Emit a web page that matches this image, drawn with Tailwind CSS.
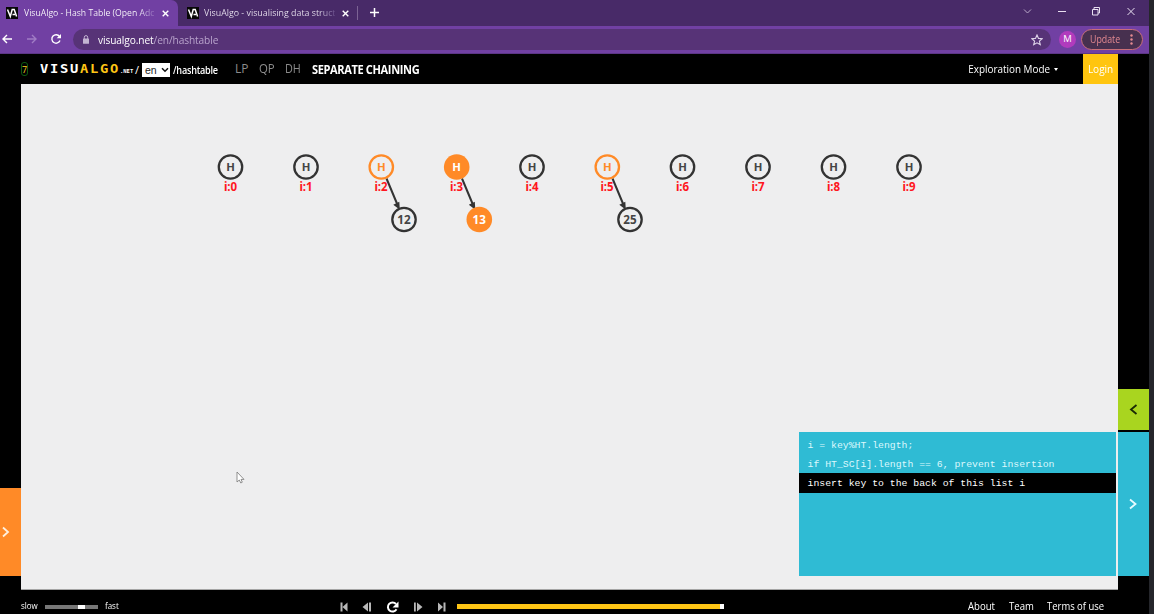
<!DOCTYPE html>
<html lang="en">
<head>
<meta charset="utf-8">
<title>VisuAlgo - Hash Table</title>
<script src="https://cdn.jsdelivr.net/npm/@tailwindcss/browser@4"></script>
</head>
<body class="w-[1154px] h-[614px] overflow-hidden bg-[#25262b] font-['Open_Sans',sans-serif]">
<div class="relative w-[1149px] h-[614px] flex flex-col bg-black overflow-hidden whitespace-nowrap">

  <!-- tab strip -->
  <div class="h-[26px] shrink-0 flex bg-[#482a68] text-[9.500px] text-white">
    <div class="w-[178px] h-full bg-[#7140a3] rounded-tr-[7px] flex items-center pl-[6px]">
      <svg class="w-3 h-3 shrink-0" viewBox="0 0 12 12"><rect width="12" height="12" fill="#080808"/><path d="M1.500 2.500L4.300 9.500 6.200 2.500H8.200L10.600 9.500M6.500 7.500H9" fill="none" stroke="#fff" stroke-width="1.500"/></svg>
      <div class="ml-[6px] w-[132px]"><span class="inline-block origin-left scale-x-[0.91] bg-linear-to-r from-white from-88% to-[#8d64b7] bg-clip-text text-transparent">VisuAlgo - Hash Table (Open Adc</span></div>
      <svg class="ml-[6px] w-[7px] h-[7px]" viewBox="0 0 7 7"><path d="M.7.7l5.600 5.600M6.300.7L.7 6.300" stroke="#fff" stroke-width="1.400"/></svg>
    </div>
    <div class="w-[180px] flex items-center pl-[9px]">
      <svg class="w-3 h-3 shrink-0" viewBox="0 0 12 12"><rect width="12" height="12" fill="#080808"/><path d="M1.500 2.500L4.300 9.500 6.200 2.500H8.200L10.600 9.500M6.500 7.500H9" fill="none" stroke="#fff" stroke-width="1.500"/></svg>
      <div class="ml-[5px] w-[132px]"><span class="inline-block origin-left scale-x-[0.93] bg-linear-to-r from-[#ece6f2] from-88% to-[#654986] bg-clip-text text-transparent">VisuAlgo - visualising data struct</span></div>
      <svg class="ml-[6px] w-[7px] h-[7px]" viewBox="0 0 7 7"><path d="M.7.7l5.600 5.600M6.300.7L.7 6.300" stroke="#fff" stroke-width="1.400"/></svg>
      <div class="ml-[8px] w-px h-[14px] bg-[#7c6394]"></div>
    </div>
    <svg class="ml-[12px] mt-[8px] w-[9px] h-[9px]" viewBox="0 0 9 9"><path d="M4.500 0v9M0 4.500h9" stroke="#fff" stroke-width="1.500"/></svg>
    <div class="flex-1"></div>
    <svg class="w-[114px] h-[22px] mr-[12px]" viewBox="0 0 114 22" fill="none" stroke="#e9e0f1"><path d="M1 9.500l3.500 3.500L8 9.500" stroke="#b9a8c9"/><path d="M35 11.500h8"/><path d="M69.500 9.500h5.500v5.500h-5.500zM71 9V7.500h5.500V13H75"/><path d="M104.500 8l7 7M111.500 8l-7 7"/></svg>
  </div>

  <!-- address bar -->
  <div class="h-[28px] shrink-0 flex items-center bg-[#7140a3] border-b border-[#5c3686]">
    <svg class="w-[73px] h-[27px]" viewBox="0 0 73 27" fill="none" stroke-width="1.400"><path d="M12 13H3M7 9l-4 4 4 4" stroke="#fff"/><path d="M27 13h9M32 9l4 4-4 4" stroke="#a07cc5"/><path d="M59.500 10.500A4.200 4.200 0 1 0 60 14.500" stroke="#fff"/><path d="M61 8v4.300h-4.300z" fill="#fff"/></svg>
    <div class="w-[978px] h-[21px] rounded-full bg-[#573377] flex items-center pl-[9px] pr-[8px]">
      <svg class="w-[8px] h-[9px]" viewBox="0 0 8 9"><rect x="1" y="3.500" width="6" height="5.300" rx=".6" fill="#c3b4d2"/><path d="M2.300 4V2.300a1.700 1.700 0 0 1 3.400 0V4" fill="none" stroke="#c3b4d2"/></svg>
      <div class="ml-[8px] mt-[1px] text-[11px] text-[#b9a4cc] tracking-[-0.12px] origin-left scale-x-[0.925]"><span class="text-white">visualgo.net</span>/en/hashtable</div>
      <svg class="ml-auto w-[12px] h-[12px]" viewBox="0 0 12 12"><path d="M6 1l1.500 3.400 3.700.3-2.800 2.400.9 3.600L6 8.800l-3.300 1.900.9-3.600L.8 4.700l3.700-.3z" fill="none" stroke="#e0d5ea" stroke-width="1.100"/></svg>
    </div>
    <div class="ml-[8px] w-[17px] h-[17px] rounded-full bg-[#b13bbd] text-white text-[9.500px] flex items-center justify-center">M</div>
    <div class="ml-[5px] w-[62px] h-[21px] rounded-full border border-[#c96f78] bg-[#47304f] text-[#e58a91] text-[10px] flex items-center pl-[8px]"><span class="w-[32px] origin-left scale-x-[0.88]">Update</span>
      <svg class="ml-[8px] w-[3px] h-[11px]" viewBox="0 0 3 11" fill="#e58a91"><circle cx="1.500" cy="1.500" r="1.200"/><circle cx="1.500" cy="5.500" r="1.200"/><circle cx="1.500" cy="9.500" r="1.200"/></svg>
    </div>
  </div>

  <!-- site navigation -->
  <div class="h-[30px] shrink-0 flex items-center text-white pl-[21px]">
    <div class="w-[7px] h-[14px] rounded-[3px] border border-[#0c5a12] text-[#ffd01f] text-[9px] leading-none flex items-center justify-center">7</div>
    <svg class="ml-[12px] w-[80px] h-[14px]" viewBox="0 0 80 14" font-family="DejaVu Sans Mono, monospace" font-weight="700" font-size="12" fill="#fff"><text transform="scale(1.150 1)" x="0" y="11.500" textLength="68" lengthAdjust="spacing">VISU<tspan fill="#fec515">ALGO</tspan></text></svg>
    <div class="w-[14px] mt-[4px] font-['DejaVu_Sans_Mono',monospace] font-bold text-[5.500px]">.NET</div>
    <div class="ml-[1px] w-[6px] mt-[2px] text-[11px]">/</div>
    <div class="ml-[1px] w-[28px] h-[14px] mt-[2px] bg-white text-[#222] text-[10.500px] leading-none flex items-center pl-[3px] font-['Liberation_Sans',sans-serif]">en
      <svg class="ml-[4px] w-[8px] h-[6px]" viewBox="0 0 8 6"><path d="M1 1.200l3 3 3-3" fill="none" stroke="#111" stroke-width="1.500"/></svg>
    </div>
    <div class="ml-[3px] mt-[2px] w-[46px] text-[10px] font-semibold tracking-[-0.25px] origin-left scale-x-[0.91]">/hashtable</div>
    <div class="ml-[16px] w-[24px] text-[12px] text-[#8c8c8c]">LP</div>
    <div class="w-[26px] text-[12px] text-[#8c8c8c] origin-left scale-x-95">QP</div>
    <div class="w-[27px] text-[12px] text-[#8c8c8c] origin-left scale-x-90">DH</div>
    <div class="mt-[1px] text-[12px] font-bold tracking-[-0.4px] origin-left scale-x-[0.92]">SEPARATE CHAINING</div>
    <div class="ml-auto text-[11.500px] origin-right scale-x-[0.86]">Exploration Mode</div>
    <div class="ml-[4px] border-x-[2.500px] border-x-transparent border-t-[3.500px] border-t-white"></div>
    <div class="ml-[25px] mr-[31px] w-[35px] h-full bg-[#ffc50f] text-[11.500px] flex items-center justify-center"><span class="scale-x-[0.87]">Login</span></div>
  </div>

  <!-- visualisation -->
  <div class="h-[506px] shrink-0 flex">
    <div class="w-[21px] flex flex-col pt-[404px]">
      <div class="h-[88px] bg-[#ff8a27] flex items-center">
        <svg class="ml-[2px] w-[8px] h-[12px]" viewBox="0 0 8 12"><path d="M1 1.500L6 6 1 10.500" fill="none" stroke="#fff0df" stroke-width="1.800"/></svg>
      </div>
    </div>
    <div class="relative w-[1097px] bg-[#eeeeef] border-b border-[#a5a5a5]">
      <svg class="block w-[1097px] h-[505px]" viewBox="21 84 1097 505" font-family="Noto Sans, sans-serif" font-weight="700" text-anchor="middle">
        <g font-size="11.500" fill="#ff1620">
          <text x="230.500" y="190.700" textLength="13">i:0</text><text x="306" y="190.700" textLength="13">i:1</text><text x="381" y="190.700" textLength="13">i:2</text><text x="456.500" y="190.700" textLength="13">i:3</text><text x="532" y="190.700" textLength="13">i:4</text><text x="607" y="190.700" textLength="13">i:5</text><text x="682.500" y="190.700" textLength="13">i:6</text><text x="758" y="190.700" textLength="13">i:7</text><text x="833.500" y="190.700" textLength="13">i:8</text><text x="909" y="190.700" textLength="13">i:9</text>
        </g>
        <g stroke="#333" stroke-width="2"><path d="M386.500 178.500L398 206M462 178.500L473.500 206M612.500 178.500L624 206"/></g>
        <path d="M399.800 209.800l-6.500-5 6-3zM475.300 209.800l-6.500-5 6-3zM625.800 209.800l-6.500-5 6-3z" fill="#333"/>
        <g fill="#eeeeef" stroke="#333" stroke-width="2.300">
          <circle cx="230.500" cy="167" r="11.700"/><circle cx="306" cy="167" r="11.700"/><circle cx="532" cy="167" r="11.700"/><circle cx="682.500" cy="167" r="11.700"/><circle cx="758" cy="167" r="11.700"/><circle cx="833.500" cy="167" r="11.700"/><circle cx="909" cy="167" r="11.700"/><circle cx="404" cy="219.500" r="11.700"/><circle cx="630" cy="219.500" r="11.700"/>
        </g>
        <g fill="#eeeeef" stroke="#ff8a27" stroke-width="2.300"><circle cx="381.300" cy="167" r="11.700"/><circle cx="607.300" cy="167" r="11.700"/></g>
        <g fill="#ff8a27"><circle cx="456.700" cy="167" r="12.800"/><circle cx="479.300" cy="219.500" r="12.800"/></g>
        <g font-size="11.300" fill="#444">
          <text x="230.500" y="171.200">H</text><text x="306" y="171.200">H</text><text x="381.300" y="171.200" fill="#ff8a27">H</text><text x="456.700" y="171.200" fill="#fff">H</text><text x="532" y="171.200">H</text><text x="607.300" y="171.200" fill="#ff8a27">H</text><text x="682.500" y="171.200">H</text><text x="758" y="171.200">H</text><text x="833.500" y="171.200">H</text><text x="909" y="171.200">H</text>
        </g>
        <g font-size="11.700" fill="#444"><text x="404" y="223.700">12</text><text x="479.300" y="223.700" fill="#fff">13</text><text x="630" y="223.700">25</text></g>
        <path d="M237 472v10l2.300-2 1.500 3 1.500-.8-1.300-2.800h3z" fill="#fff" stroke="#777" stroke-width=".8"/>
      </svg>
      <div class="absolute left-[778px] top-[348px] w-[317px] h-[144px] bg-[#2fbbd4] pt-[3px] font-['Liberation_Mono',monospace] text-[9.800px] text-[#dcf8fc]">
        <div class="h-[19px] leading-[22px] pl-[8.500px]">i = key%HT.length;</div>
        <div class="h-[19px] leading-[22px] pl-[8.500px]">if HT_SC[i].length == 6, prevent insertion</div>
        <div class="h-[20px] leading-[22px] pl-[8.500px] bg-black text-white">insert key to the back of this list i</div>
      </div>
    </div>
    <div class="w-[31px] flex flex-col pt-[305px]">
      <div class="h-[41px] bg-[#a9d51f] flex items-center justify-center"><svg class="w-[9px] h-[12px]" viewBox="0 0 9 12"><path d="M7.500 1L2 5.500 7.500 10" fill="none" stroke="#1a2a05" stroke-width="1.800"/></svg></div>
      <div class="mt-[2px] h-[144px] bg-[#2fbbd4] flex items-center justify-center"><svg class="w-[9px] h-[12px]" viewBox="0 0 9 12"><path d="M1 1.500L6.500 6 1 10.500" fill="none" stroke="#e8fbff" stroke-width="1.800"/></svg></div>
    </div>
  </div>

  <!-- playback bar -->
  <div class="h-[24px] shrink-0 flex items-center pt-[8px] pl-[21px] text-white text-[9.500px]">
    <div class="w-[24px] origin-left scale-x-[0.84]">slow</div>
    <div class="w-[53px] h-[4px] bg-[#777] mt-[2px]"><div class="ml-[33px] w-[7px] h-full bg-white"></div></div>
    <div class="ml-[7px] w-[17px] origin-left scale-x-[0.84]">fast</div>
    <svg class="ml-[216px] mt-[1px] w-[112px] h-[14px]" viewBox="338 600 112 14" fill="#b8b8b8"><path d="M340.500 602.500h2v9h-2zM347.500 602.500v9l-5-4.500zM368 602.500v9l-5.500-4.500zM369 602.500h2v9h-2zM414 602.500h1.800v9H414zM417 602.500v9l5.500-4.500zM438 602.500v9l5-4.500zM443.500 602.500h2v9h-2z"/><path d="M396 604a4.600 4.600 0 1 0 .5 5.300" fill="none" stroke="#fff" stroke-width="2"/><path d="M398.500 601.500v6h-6z" fill="#fff"/></svg>
    <div class="ml-[7px] mt-[1px] w-[267px] h-[5px] bg-[#fec515] flex justify-end"><div class="w-[4px] h-full bg-white"></div></div>
    <div class="ml-auto mr-[44px] flex text-[11px]"><span class="w-[41px] origin-left scale-x-[0.87]">About</span><span class="w-[38px] origin-left scale-x-[0.87]">Team</span><span class="w-[58px] origin-left scale-x-[0.86]">Terms of use</span></div>
  </div>
</div>
</body>
</html>
